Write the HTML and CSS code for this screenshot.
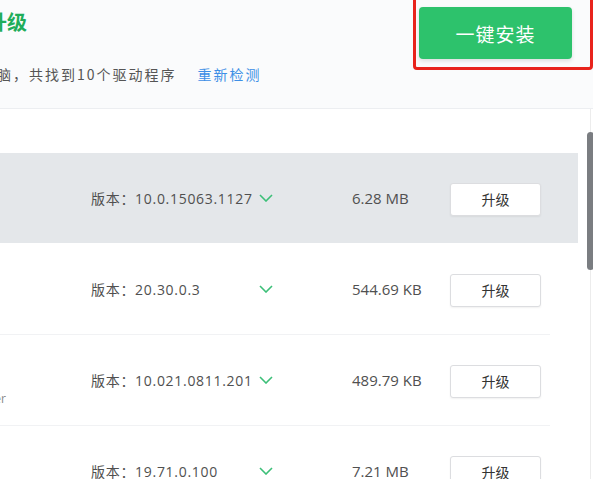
FILE: index.html
```
<!DOCTYPE html>
<html lang="zh-CN">
<head>
  <meta charset="UTF-8" />
  <meta name="viewport" content="width=device-width, initial-scale=1.0" />
  <title>驱动升级</title>
  <link rel="stylesheet" href="styles.css">
</head>
<body>
  <div class="app">
    <header class="top">
      <div class="intro">
        <h1 class="title">驱动升级</h1>
        <p class="summary">扫描您的电脑，共找到10个驱动程序<a class="rescan" href="#">重新检测</a></p>
      </div>
      <div class="install-wrap">
        <button class="install">一键安装</button>
        <span class="mark"></span>
      </div>
    </header>

    <section class="list-area">
      <ul class="drivers">
        <li class="driver active">
          <div class="name"><span class="main">Windows 10 更新</span><span class="sub">Microsoft</span></div>
          <div class="version">版本：10.0.15063.1127<svg class="chev" viewBox="0 0 14 8"><polyline points="1,1 7,7 13,1"/></svg></div>
          <div class="size">6.28 MB</div>
          <button class="upgrade">升级</button>
        </li>
        <li class="driver">
          <div class="name"><span class="main">Intel 蓝牙</span><span class="sub">Intel Bluetooth</span></div>
          <div class="version">版本：20.30.0.3<svg class="chev" viewBox="0 0 14 8"><polyline points="1,1 7,7 13,1"/></svg></div>
          <div class="size">544.69 KB</div>
          <button class="upgrade">升级</button>
        </li>
        <li class="driver">
          <div class="name"><span class="main">读卡器</span><span class="sub">Realtek USB 2.0 Card Reader</span></div>
          <div class="version">版本：10.021.0811.201<svg class="chev" viewBox="0 0 14 8"><polyline points="1,1 7,7 13,1"/></svg></div>
          <div class="size">489.79 KB</div>
          <button class="upgrade">升级</button>
        </li>
        <li class="driver">
          <div class="name"><span class="main">无线网卡</span><span class="sub">Intel Wireless-AC 9560 Adapter</span></div>
          <div class="version">版本：19.71.0.100<svg class="chev" viewBox="0 0 14 8"><polyline points="1,1 7,7 13,1"/></svg></div>
          <div class="size">7.21 MB</div>
          <button class="upgrade">升级</button>
        </li>
      </ul>
      <div class="scrollbar"><div class="thumb"></div></div>
    </section>
  </div>
</body>
</html>
```

FILE: styles.css
```
html, body {
  margin: 0;
  padding: 0;
  overflow: hidden;
  background: #fff;
}

body {
  font-family: "Open Sans", "Noto Sans CJK SC", sans-serif;
  color: #555;
}

.app {
  margin-left: -170px;
  width: 763px;
}

.top {
  height: 108px;
  border-bottom: 1px solid #eceef1;
  background: #fafbfc;
  display: flex;
  justify-content: space-between;
  align-items: flex-start;
  padding: 0 21px 0 117px;
}

.title {
  margin: 8px 0 0;
  font-size: 20px;
  line-height: 28px;
  font-weight: bold;
  color: #1fad5a;
  font-family: "Noto Sans CJK SC", sans-serif;
}

.summary {
  margin: 28px 0 0 -30px;
  font-size: 14px;
  line-height: 20px;
  letter-spacing: 2px;
  color: #555;
  font-family: "Noto Sans CJK SC", sans-serif;
}

.rescan {
  margin-left: 21px;
  color: #3d8fe6;
  text-decoration: none;
}

.install-wrap {
  position: relative;
  margin-top: 7px;
}

.install {
  width: 153px;
  height: 52px;
  border: none;
  border-radius: 4px;
  background: #2dc26c;
  color: #fff;
  font-size: 19px;
  letter-spacing: 1px;
  font-family: "Noto Sans CJK SC", sans-serif;
  box-shadow: 0 2px 4px rgba(0,0,0,0.12);
  cursor: pointer;
}

.mark {
  position: absolute;
  left: -6px;
  right: -21px;
  top: -20px;
  bottom: -11px;
  border: 3px solid #e8231c;
  border-radius: 4px;
}

.list-area {
  position: relative;
  height: 370px;
}

.drivers {
  list-style: none;
  margin: 0;
  padding: 44px 0 0;
  width: 748px;
}

.driver {
  display: flex;
  align-items: center;
  height: 90px;
  border-bottom: 1px solid #f1f2f4;
  margin-right: 28px;
}

.driver.active {
  background: #e4e7ea;
  border-bottom-color: #fff;
  margin-right: 0;
}

.name {
  width: 245px;
  padding-left: 16px;
  display: flex;
  flex-direction: column;
  white-space: nowrap;
  padding-top: 14px;
}

.name .main {
  font-size: 14px;
  color: #333;
}

.name .sub {
  font-size: 12px;
  color: #888;
  margin-top: 3px;
}

.version {
  width: 182px;
  display: flex;
  justify-content: space-between;
  align-items: center;
  font-size: 14px;
  letter-spacing: 0.7px;
  color: #505050;
}

.chev {
  width: 14px;
  height: 8px;
  fill: none;
  stroke: #3cbf78;
  stroke-width: 1.6;
}

.size {
  margin-left: 79px;
  width: 98px;
  font-size: 15px;
  color: #505050;
}

.upgrade {
  width: 91px;
  height: 33px;
  margin-top: 2px;
  border: 1px solid #dcdde0;
  border-radius: 3px;
  background: #fff;
  color: #333;
  font-size: 14px;
  font-family: "Noto Sans CJK SC", sans-serif;
  box-shadow: 0 1px 2px rgba(0,0,0,0.06);
  cursor: pointer;
}

.scrollbar {
  position: absolute;
  top: 0;
  bottom: 0;
  left: 760px;
  width: 3px;
  border-left: 1px solid #ececec;
}

.thumb {
  position: absolute;
  top: 23px;
  left: -4px;
  width: 7px;
  height: 138px;
  border-radius: 4px;
  background: #7a7d81;
}
```
